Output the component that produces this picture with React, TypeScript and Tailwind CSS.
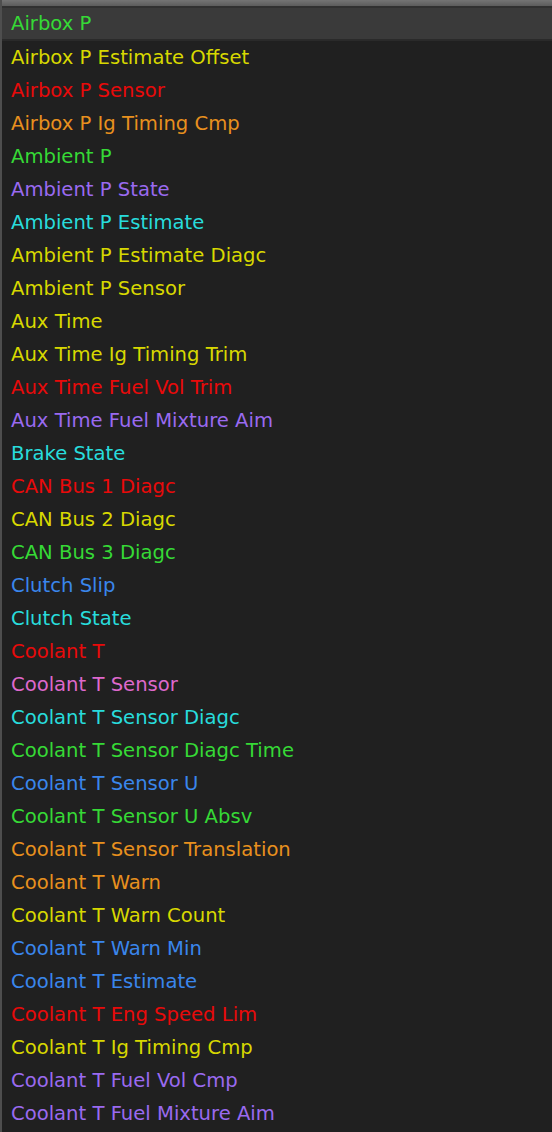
const G = "text-[#36d936]";
const Y = "text-[#d8d800]";
const R = "text-[#e80a0a]";
const O = "text-[#e8901e]";
const P = "text-[#9a6af0]";
const C = "text-[#28dcdc]";
const B = "text-[#3a86ec]";
const K = "text-[#de68cc]";

const channels: [string, string][] = [
  ["Airbox P", G],
  ["Airbox P Estimate Offset", Y],
  ["Airbox P Sensor", R],
  ["Airbox P Ig Timing Cmp", O],
  ["Ambient P", G],
  ["Ambient P State", P],
  ["Ambient P Estimate", C],
  ["Ambient P Estimate Diagc", Y],
  ["Ambient P Sensor", Y],
  ["Aux Time", Y],
  ["Aux Time Ig Timing Trim", Y],
  ["Aux Time Fuel Vol Trim", R],
  ["Aux Time Fuel Mixture Aim", P],
  ["Brake State", C],
  ["CAN Bus 1 Diagc", R],
  ["CAN Bus 2 Diagc", Y],
  ["CAN Bus 3 Diagc", G],
  ["Clutch Slip", B],
  ["Clutch State", C],
  ["Coolant T", R],
  ["Coolant T Sensor", K],
  ["Coolant T Sensor Diagc", C],
  ["Coolant T Sensor Diagc Time", G],
  ["Coolant T Sensor U", B],
  ["Coolant T Sensor U Absv", G],
  ["Coolant T Sensor Translation", O],
  ["Coolant T Warn", O],
  ["Coolant T Warn Count", Y],
  ["Coolant T Warn Min", B],
  ["Coolant T Estimate", B],
  ["Coolant T Eng Speed Lim", R],
  ["Coolant T Ig Timing Cmp", Y],
  ["Coolant T Fuel Vol Cmp", P],
  ["Coolant T Fuel Mixture Aim", P],
];

export default function App() {
  return (
    <div className="w-[552px] h-[1132px] overflow-hidden bg-[#202020] border-l-2 border-[#4e4e4e] font-['DejaVu_Sans',sans-serif]">
      <div className="h-[6px] bg-gradient-to-b from-[#747474] to-[#5c5c5c]" />
      <div className="h-[2px] bg-[#303030]" />
      <ul>
        {channels.map(([name, color], i) => (
          <li
            key={name}
            className={`h-[33px] flex items-center pl-[9px] text-[19.6px] ${color} ${
              i === 0 ? "bg-[#3a3a3a] border-b-2 border-[#2a2a2a]" : ""
            }`}
          >
            {name}
          </li>
        ))}
      </ul>
    </div>
  );
}
